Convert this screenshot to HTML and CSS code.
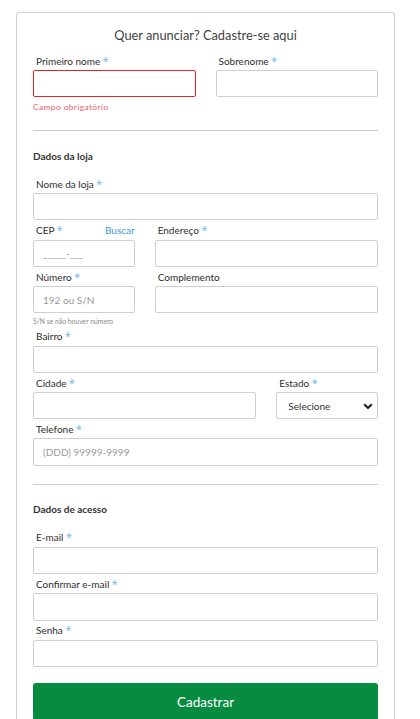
FILE: index.html
```html
<!DOCTYPE html>
<html lang="pt-BR">
<head>
<meta charset="utf-8">
<title>Cadastro</title>
<link rel="stylesheet" href="styles.css">
</head>
<body>
<div class="card">
  <h1 class="title">Quer anunciar? Cadastre-se aqui</h1>

  <div class="row half">
    <div class="field">
      <label class="label">Primeiro nome <span class="req">*</span></label>
      <input class="input error" type="text">
      <div class="err-msg">Campo obrigatório</div>
    </div>
    <div class="field">
      <label class="label">Sobrenome <span class="req">*</span></label>
      <input class="input" type="text">
    </div>
  </div>

  <hr class="divider">

  <h2 class="section">Dados da loja</h2>

  <div class="field">
    <label class="label">Nome da loja <span class="req">*</span></label>
    <input class="input" type="text">
  </div>

  <div class="row third-left">
    <div class="field">
      <div class="label-row">
        <label class="label">CEP <span class="req">*</span></label>
        <a class="link">Buscar</a>
      </div>
      <input class="input" type="text" placeholder="_____-___">
    </div>
    <div class="field">
      <label class="label">Endereço <span class="req">*</span></label>
      <input class="input" type="text">
    </div>
  </div>

  <div class="row third-left">
    <div class="field">
      <label class="label">Número <span class="req">*</span></label>
      <input class="input" type="text" placeholder="192 ou S/N">
      <div class="hint">S/N se não houver número</div>
    </div>
    <div class="field">
      <label class="label">Complemento</label>
      <input class="input" type="text">
    </div>
  </div>

  <div class="field">
    <label class="label">Bairro <span class="req">*</span></label>
    <input class="input" type="text">
  </div>

  <div class="row third-right">
    <div class="field">
      <label class="label">Cidade <span class="req">*</span></label>
      <input class="input" type="text">
    </div>
    <div class="field">
      <label class="label">Estado <span class="req">*</span></label>
      <div class="select-wrap">
        <select class="input select">
          <option>Selecione</option>
        </select>
        <svg class="chevron" width="10" height="7" viewBox="0 0 10 7"><path d="M1.2 1.3 L5 5 L8.8 1.3" fill="none" stroke="#222" stroke-width="2.2"/></svg>
      </div>
    </div>
  </div>

  <div class="field">
    <label class="label">Telefone <span class="req">*</span></label>
    <input class="input" type="text" placeholder="(DDD) 99999-9999">
  </div>

  <hr class="divider divider-2">

  <h2 class="section">Dados de acesso</h2>

  <div class="field">
    <label class="label">E-mail <span class="req">*</span></label>
    <input class="input" type="text">
  </div>
  <div class="field">
    <label class="label">Confirmar e-mail <span class="req">*</span></label>
    <input class="input" type="text">
  </div>
  <div class="field">
    <label class="label">Senha <span class="req">*</span></label>
    <input class="input" type="password">
  </div>

  <button class="btn" type="button">Cadastrar</button>
</div>
</body>
</html>
```

FILE: styles.css
```css
* { box-sizing: border-box; }

html, body {
  margin: 0;
  padding: 0;
  background: #fff;
}

body {
  font-family: Lato, "Open Sans", sans-serif;
  color: #444;
}

.card {
  display: flex;
  flex-direction: column;
  margin: 12px 0 0 16px;
  width: 379px;
  height: 720px;
  border: 1px solid #d2d2d2;
  border-bottom: none;
  border-radius: 3px 3px 0 0;
  padding: 13px 16px 0 16px;
  overflow: hidden;
}

.title {
  margin: 0 0 9.5px 0;
  font-size: 12.8px;
  line-height: 18px;
  font-weight: 400;
  text-align: center;
  color: #3f3f3f;
}

.row {
  display: grid;
  column-gap: 20px;
}
.half { grid-template-columns: 1fr 1fr; }
.third-left { grid-template-columns: calc((100% + 20px) / 3 - 20px) 1fr; }
.third-right { grid-template-columns: 1fr calc((100% + 20px) / 3 - 20px); }

.field {
  display: flex;
  flex-direction: column;
  margin-bottom: 2.6px;
}

.label {
  display: block;
  font-size: 10px;
  line-height: 15px;
  margin: 0 0 1.5px 3px;
  color: #2e2e2e;
}

.label-row {
  display: flex;
  justify-content: space-between;
  align-items: baseline;
}

.link {
  font-size: 10px;
  line-height: 15px;
  color: #3e9ad6;
  cursor: pointer;
}

.req {
  font-family: "Open Sans", sans-serif;
  font-size: 10.5px;
  color: #62b4e6;
}

.input {
  display: block;
  width: 100%;
  height: 27.4px;
  border: 1px solid #cfcfcf;
  border-radius: 2px;
  padding: 0 9px;
  font-family: Lato, "Open Sans", sans-serif;
  font-size: 10px;
  color: #333;
  background: #fff;
  outline: none;
  margin: 0;
}
.input::placeholder { color: #9a9a9a; }

.input.error { border-color: #e8222a; }

.err-msg {
  margin-top: 4px;
  font-size: 8.4px;
  line-height: 12px;
  letter-spacing: 0.4px;
  color: #f06272;
}

.hint {
  margin-top: 3px;
  font-size: 6.8px;
  line-height: 10px;
  color: #8a8a8a;
}

.divider {
  flex: none;
  width: 100%;
  border: none;
  border-top: 1px solid #cccccc;
  margin: 14.4px 0 0 0;
  height: 0;
}
.divider-2 { margin-top: 15.5px; }

.section {
  margin: 17.2px 0 13px 0;
  font-size: 10px;
  line-height: 15px;
  font-weight: 700;
  color: #333;
}

.select-wrap { position: relative; }

.select {
  appearance: none;
  -webkit-appearance: none;
  padding-left: 11px;
  color: #333;
}

.chevron {
  position: absolute;
  right: 5px;
  top: 10.5px;
  pointer-events: none;
}

.btn {
  flex: none;
  display: block;
  width: 100%;
  margin-top: 13.4px;
  height: 38px;
  border: none;
  border-radius: 3px;
  background: #078b41;
  color: #fff;
  font-family: Lato, "Open Sans", sans-serif;
  font-size: 13.5px;
}
```
